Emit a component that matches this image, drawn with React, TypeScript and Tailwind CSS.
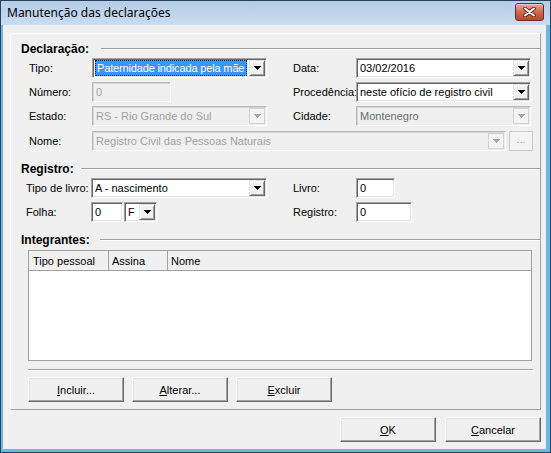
import React from 'react'

const sunken =
  'border border-t-[#a0a0a0] border-l-[#a0a0a0] border-b-white border-r-white shadow-[inset_1px_1px_0_#696969,inset_-1px_-1px_0_#e3e3e3]'
const sunkenOff =
  'border border-t-[#b9b9b9] border-l-[#b9b9b9] border-b-white border-r-white shadow-[inset_1px_1px_0_#d4d4d4,inset_-1px_-1px_0_#ececec]'

function Tri({ color }: { color: string }) {
  return (
    <svg width="7" height="4" viewBox="0 0 7 4" shapeRendering="crispEdges">
      <path d="M0 0h7v1H0zM1 1h5v1H1zM2 2h3v1H2zM3 3h1v1H3z" fill={color} />
    </svg>
  )
}

function DropBtn({ disabled }: { disabled?: boolean }) {
  return disabled ? (
    <div className="flex w-[16px] shrink-0 items-center justify-center border border-[#d3d3d3] bg-[#f4f4f4]">
      <Tri color="#a8a8a8" />
    </div>
  ) : (
    <div className="flex w-[16px] shrink-0 items-center justify-center border border-t-[#e3e3e3] border-l-[#e3e3e3] border-b-[#696969] border-r-[#696969] bg-[#f0f0f0] shadow-[inset_1px_1px_0_#fff,inset_-1px_-1px_0_#a0a0a0]">
      <Tri color="#000" />
    </div>
  )
}

interface ComboProps {
  w: string
  value: string
  disabled?: boolean
  selected?: boolean
  muted?: boolean
}

function Combo({ w, value, disabled, selected, muted }: ComboProps) {
  return (
    <div className={`flex h-[20px] ${w} p-[1px] ${disabled ? `${sunkenOff} bg-[#f0f0f0]` : `${sunken} bg-white`}`}>
      <div className="flex min-w-0 flex-1 items-center overflow-hidden pl-[1px] pr-[2px]">
        {selected ? (
          <span className="flex h-[16px] min-w-0 flex-1 items-center overflow-hidden whitespace-nowrap border border-dotted border-[#222] bg-[#3399ff] pl-[1px] tracking-[-0.15px] text-white">
            {value}
          </span>
        ) : (
          <span
            className={`whitespace-nowrap pl-[1px] ${disabled ? (muted ? 'text-[#6d6d6d]' : 'text-[#a0a0a0]') : 'text-black'}`}
          >
            {value}
          </span>
        )}
      </div>
      <DropBtn disabled={disabled} />
    </div>
  )
}

function Edit({ w, value, disabled }: { w: string; value: string; disabled?: boolean }) {
  return (
    <div
      className={`flex h-[20px] ${w} items-center pl-[3px] ${disabled ? `${sunkenOff} bg-[#f0f0f0] text-[#a0a0a0]` : `${sunken} bg-white text-black`}`}
    >
      {value}
    </div>
  )
}

function Section({ title, w }: { title: string; w: string }) {
  return (
    <div className="flex h-[14px] items-center pl-[10px]">
      <span className={`${w} text-[12px] font-bold leading-[14px] text-black`}>{title}</span>
      <div className="h-0 flex-1 border-t border-b border-t-[#a0a0a0] border-b-white" />
    </div>
  )
}

function Btn({ children, className = '' }: { children: React.ReactNode; className?: string }) {
  return (
    <button
      className={`flex h-[25px] w-[96px] items-center justify-center border border-t-white border-l-white border-b-[#696969] border-r-[#696969] bg-[#f0f0f0] text-[11px] text-black shadow-[inset_-1px_-1px_0_#a0a0a0,inset_1px_1px_0_#e3e3e3] ${className}`}
    >
      {children}
    </button>
  )
}

function Key({ k, rest }: { k: string; rest: string }) {
  return (
    <span>
      <span className="underline underline-offset-[1px]">{k}</span>
      {rest}
    </span>
  )
}

export default function App() {
  return (
    <div className="flex h-[453px] w-[551px] flex-col border border-[#26405f] bg-[#6eb6e6] font-['Liberation_Sans',Arial,sans-serif] text-[11px] leading-[16px]">
      {/* title bar */}
      <div className="flex h-[24px] shrink-0 items-center bg-gradient-to-b from-[#b5cde7] to-[#c9dcf1] pl-[6px] pr-[6px]">
        <span className="flex-1 font-['Noto_Sans',sans-serif] text-[12px] text-black">Manutenção das declarações</span>
        <div className="mt-[-2px] flex h-[18px] w-[29px] items-center justify-center rounded-[3px] border border-[#6e2a1e] bg-gradient-to-b from-[#e8a898] via-[#d06a52] to-[#c0442c] shadow-[inset_0_1px_0_#f6d0c4]">
          <svg width="13" height="10" viewBox="0 0 13 10">
            <path d="M2 1.5l9 7M11 1.5l-9 7" stroke="#5a1f14" strokeWidth="3.6" strokeLinecap="round" />
            <path d="M2 1.5l9 7M11 1.5l-9 7" stroke="#fff" strokeWidth="2" strokeLinecap="round" />
          </svg>
        </div>
      </div>

      {/* body */}
      <div className="mb-[3px] ml-[2px] mr-[4px] flex flex-1 flex-col bg-[#f0f0f0] pl-[7px] pr-[5px] pt-[8px]">
        <div className="flex flex-col border border-t-white border-l-white border-b-[#a0a0a0] border-r-[#a0a0a0] pb-[7px]">
          <div className="mt-[8px]">
            <Section title="Declaração:" w="w-[80px]" />
          </div>

          <div className="mt-[2px] flex items-center pl-[18px]">
            <span className="w-[63px]">Tipo:</span>
            <Combo w="w-[175px]" value="Paternidade indicada pela mãe" selected />
            <span className="ml-[26px] w-[63px]">Data:</span>
            <Combo w="w-[175px]" value="03/02/2016" />
          </div>

          <div className="mt-[4px] flex items-center pl-[18px]">
            <span className="w-[63px]">Número:</span>
            <Edit w="w-[79px]" value="0" disabled />
            <span className="ml-[122px] w-[63px]">Procedência:</span>
            <Combo w="w-[175px]" value="neste ofício de registro civil" />
          </div>

          <div className="mt-[4px] flex items-center pl-[18px]">
            <span className="w-[63px]">Estado:</span>
            <Combo w="w-[175px]" value="RS - Rio Grande do Sul" disabled />
            <span className="ml-[26px] w-[63px]">Cidade:</span>
            <Combo w="w-[175px]" value="Montenegro" disabled muted />
          </div>

          <div className="mt-[5px] flex items-center pl-[18px]">
            <span className="w-[63px]">Nome:</span>
            <Combo w="w-[414px]" value="Registro Civil das Pessoas Naturais" disabled />
            <div className="ml-[3px] flex h-[20px] w-[24px] items-start justify-center border border-[#c9c9c9] bg-[#f4f4f4] text-[#a0a0a0] leading-[14px]">
              ...
            </div>
          </div>

          <div className="mt-[11px]">
            <Section title="Registro:" w="w-[60px]" />
          </div>

          <div className="mt-[2px] flex items-center pl-[15px]">
            <span className="w-[65px]">Tipo de livro:</span>
            <Combo w="w-[176px]" value="A - nascimento" />
            <span className="ml-[26px] w-[63px]">Livro:</span>
            <Edit w="w-[39px]" value="0" />
          </div>

          <div className="mt-[4px] flex items-center pl-[15px]">
            <span className="w-[65px]">Folha:</span>
            <Edit w="w-[32px]" value="0" />
            <div className="ml-[1px]">
              <Combo w="w-[33px]" value="F" />
            </div>
            <span className="ml-[136px] w-[63px]">Registro:</span>
            <Edit w="w-[56px]" value="0" />
          </div>

          <div className="mt-[11px]">
            <Section title="Integrantes:" w="w-[79px]" />
          </div>

          <div className="ml-[17px] mt-[3px] flex h-[111px] w-[504px] flex-col border border-[#a0a0a0] bg-white">
            <div className="flex h-[20px] border-b border-[#a0a0a0] bg-[#f0f0f0]">
              <div className="flex w-[80px] items-center border-r border-[#a0a0a0] pl-[4px]">Tipo pessoal</div>
              <div className="flex w-[59px] items-center border-r border-[#a0a0a0] pl-[3px]">Assina</div>
              <div className="flex flex-1 items-center pl-[3px]">Nome</div>
            </div>
          </div>

          <div className="ml-[17px] mt-[8px] h-0 w-[505px] border-t border-b border-t-[#a0a0a0] border-b-white" />

          <div className="ml-[17px] mt-[6px] flex gap-[8px]">
            <Btn>
              <Key k="I" rest="ncluir..." />
            </Btn>
            <Btn>
              <Key k="A" rest="lterar..." />
            </Btn>
            <Btn>
              <Key k="E" rest="xcluir" />
            </Btn>
          </div>
        </div>

        <div className="mt-[7px] flex justify-end gap-[9px]">
          <Btn>
            <Key k="O" rest="K" />
          </Btn>
          <Btn>
            <Key k="C" rest="ancelar" />
          </Btn>
        </div>
      </div>
    </div>
  )
}
